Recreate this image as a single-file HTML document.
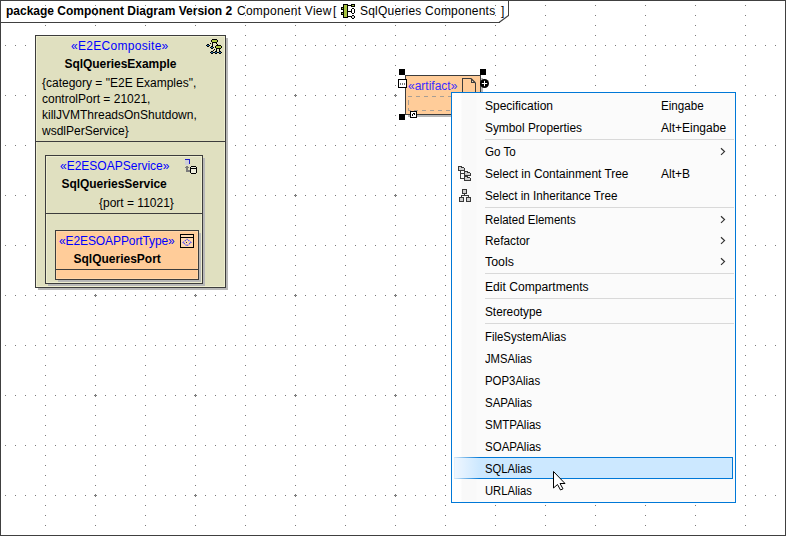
<!DOCTYPE html>
<html><head><meta charset="utf-8">
<style>
html,body{margin:0;padding:0;}
body{width:786px;height:536px;overflow:hidden;position:relative;background:#fff;font-family:"Liberation Sans",sans-serif;}
.a{position:absolute;}
.t{position:absolute;white-space:pre;font-size:12px;line-height:16px;color:#000;}
.bx{position:absolute;box-sizing:border-box;border:1px solid #3c3c3c;}
.sh{position:absolute;background:#b8b8b8;}
.st{color:#0000ff;}
.m{position:absolute;white-space:pre;font-size:12px;line-height:16px;color:#000;left:485px;transform-origin:0 0;}
.sep{position:absolute;left:485px;width:249px;height:1px;background:#d9d9d9;}
</style></head>
<body>
<!-- frame + header tab -->
<svg class="a" style="left:0;top:0" width="786" height="536" shape-rendering="crispEdges">
  <rect x="0.5" y="0.5" width="785" height="535" fill="none" stroke="#404040" stroke-width="1"/>
  <path d="M0 22.5H499.5" stroke="#404040" fill="none"/>
  <path d="M508.5 0V15.5" stroke="#404040" fill="none"/>
</svg>
<svg class="a" style="left:0;top:0" width="786" height="536">
  <path d="M499 22.5L508.5 15.5" stroke="#404040" stroke-width="1.1" fill="none"/>
</svg>
<div class="t" style="left:6px;top:3px;font-weight:bold">package Component Diagram Version 2</div>
<div class="t" style="left:237px;top:3px;letter-spacing:0.25px">Component View</div>
<div class="t" style="left:333px;top:3px">[</div>
<div class="t" style="left:360px;top:3px;letter-spacing:0.22px">SqlQueries Components</div>
<div class="t" style="left:501px;top:3px">]</div>

<!-- grid -->
<svg class="a" style="left:0;top:0" width="786" height="536" shape-rendering="crispEdges">
  <defs>
    <pattern id="ph" x="0" y="0" width="10" height="50" patternUnits="userSpaceOnUse"><rect x="5" y="45" width="1" height="1" fill="#7a7a7a"/></pattern>
    <pattern id="pv" x="0" y="0" width="50" height="10" patternUnits="userSpaceOnUse"><rect x="45" y="5" width="1" height="1" fill="#7a7a7a"/></pattern>
    <pattern id="pc" x="0" y="0" width="100" height="100" patternUnits="userSpaceOnUse"><rect x="94" y="95" width="3" height="1" fill="#7a7a7a"/><rect x="95" y="94" width="1" height="3" fill="#7a7a7a"/></pattern>
  </defs>
  <rect x="0" y="0" width="780" height="530" fill="url(#ph)"/>
  <rect x="0" y="0" width="780" height="530" fill="url(#pv)"/>
  <rect x="0" y="0" width="780" height="530" fill="url(#pc)"/>
</svg>

<!-- composite box -->
<div class="sh" style="left:38px;top:38px;width:190px;height:252px"></div>
<div class="bx" style="left:35px;top:35px;width:191px;height:253px;background:#e0e0c0;box-shadow:inset 0 0 0 1px #eeeed0"></div>
<div class="a" style="left:36px;top:141px;width:189px;height:1px;background:#3c3c3c"></div>
<div class="t st" style="left:71px;top:38px;letter-spacing:0.3px">«E2EComposite»</div>
<div class="t" style="left:64.5px;top:56px;font-weight:bold;letter-spacing:-0.05px">SqlQueriesExample</div>
<div class="t" style="left:42px;top:75px">{category = "E2E Examples",</div>
<div class="t" style="left:42px;top:91px">controlPort = 21021,</div>
<div class="t" style="left:42px;top:107px">killJVMThreadsOnShutdown,</div>
<div class="t" style="left:42px;top:123px">wsdlPerService}</div>

<!-- soap service box -->
<div class="sh" style="left:48px;top:158px;width:157px;height:128px"></div>
<div class="bx" style="left:45px;top:155px;width:158px;height:129px;background:#e0e0c0;box-shadow:inset 0 0 0 1px #eeeed0"></div>
<div class="a" style="left:46px;top:213px;width:156px;height:1px;background:#3c3c3c"></div>
<div class="t st" style="left:60px;top:158px">«E2ESOAPService»</div>
<div class="t" style="left:61.5px;top:176px;font-weight:bold;letter-spacing:-0.05px">SqlQueriesService</div>
<div class="t" style="left:99px;top:195px">{port = 11021}</div>

<!-- port box -->
<div class="sh" style="left:58px;top:233px;width:143px;height:49px"></div>
<div class="bx" style="left:55px;top:230px;width:144px;height:50px;background:#ffcc99;box-shadow:inset 0 0 0 1px #ffd6a8"></div>
<div class="a" style="left:56px;top:269px;width:142px;height:1px;background:#3c3c3c"></div>
<div class="t st" style="left:59px;top:233px;letter-spacing:-0.1px">«E2ESOAPPortType»</div>
<div class="t" style="left:73.5px;top:251px;font-weight:bold">SqlQueriesPort</div>


<svg class="a" style="left:0;top:0" width="786" height="536" shape-rendering="crispEdges">
  <!-- port type icon -->
  <rect x="180.5" y="234.5" width="13" height="13" fill="#ffd8b0" stroke="#000"/>
  <path d="M181 237.5H193" stroke="#000"/>
  <!-- soap service icon -->
<rect x="185" y="159" width="5" height="1" fill="#1c1cc8"/><rect x="185" y="160" width="4" height="1" fill="#cfcfd8"/><rect x="189" y="160" width="1" height="1" fill="#1c1cc8"/><rect x="185" y="161" width="4" height="1" fill="#cfcfd8"/><rect x="189" y="161" width="1" height="1" fill="#1c1cc8"/><rect x="185" y="162" width="4" height="1" fill="#cfcfd8"/><rect x="189" y="162" width="1" height="1" fill="#1c1cc8"/><rect x="185" y="163" width="4" height="1" fill="#cfcfd8"/><rect x="189" y="163" width="1" height="1" fill="#1c1cc8"/><rect x="185" y="164" width="4" height="1" fill="#cfcfd8"/><rect x="186" y="166" width="2" height="1" fill="#7c7c7c"/><rect x="191" y="166" width="5" height="1" fill="#000"/><rect x="185" y="167" width="4" height="1" fill="#7c7c7c"/><rect x="190" y="167" width="1" height="1" fill="#000"/><rect x="191" y="167" width="5" height="1" fill="#eeeedd"/><rect x="196" y="167" width="1" height="1" fill="#000"/><rect x="186" y="168" width="2" height="1" fill="#7c7c7c"/><rect x="190" y="168" width="7" height="1" fill="#000"/><rect x="186" y="169" width="2" height="1" fill="#7c7c7c"/><rect x="190" y="169" width="1" height="1" fill="#000"/><rect x="191" y="169" width="5" height="1" fill="#eeeedd"/><rect x="196" y="169" width="1" height="1" fill="#000"/><rect x="186" y="170" width="4" height="1" fill="#7c7c7c"/><rect x="190" y="170" width="1" height="1" fill="#000"/><rect x="191" y="170" width="5" height="1" fill="#eeeedd"/><rect x="196" y="170" width="1" height="1" fill="#000"/><rect x="186" y="171" width="4" height="1" fill="#7c7c7c"/><rect x="190" y="171" width="1" height="1" fill="#000"/><rect x="191" y="171" width="5" height="1" fill="#eeeedd"/><rect x="196" y="171" width="1" height="1" fill="#000"/><rect x="190" y="172" width="1" height="1" fill="#000"/><rect x="191" y="172" width="5" height="1" fill="#eeeedd"/><rect x="196" y="172" width="1" height="1" fill="#000"/><rect x="191" y="173" width="5" height="1" fill="#000"/>
</svg>
<svg class="a" style="left:0;top:0" width="786" height="536">
  <path d="M183 242.5L187 239.2L191 242.5L187 245.8Z" fill="none" stroke="#4646ff" stroke-width="1.1" stroke-dasharray="1.4 0.9"/>
  <rect x="186" y="242" width="1" height="1" fill="#333"/>
</svg>

<!-- artifact -->
<div class="sh" style="left:408px;top:78px;width:75px;height:39px"></div>
<div class="bx" style="left:405px;top:75px;width:76px;height:40px;background:#ffcc99"></div>
<div class="t" style="left:408px;top:78px;color:#3a2cff">«artifact»</div>
<svg class="a" style="left:0;top:0" width="786" height="536" shape-rendering="crispEdges">
  <!-- dashed inner rect -->
  <path d="M408 96.5H452" stroke="#a89e94" stroke-dasharray="4 4" fill="none"/><path d="M408.5 100V105M408.5 108V110.5H411" stroke="#a89e94" fill="none"/>
  <path d="M414 110.5H452" stroke="#a89e94" stroke-dasharray="4 4" fill="none"/>
  <!-- doc icon -->
  <path d="M471.5 79V82.5H475" stroke="#3c3c3c" fill="#ffe8d0"/>
  <path d="M462.5 92V78.5H471" stroke="#3c3c3c" fill="none"/>
  <path d="M475.5 83V92" stroke="#3c3c3c" fill="none"/>
  <!-- handles -->
  <rect x="399" y="69" width="6" height="6" fill="#000"/>
  <rect x="480" y="69" width="6" height="6" fill="#000"/>
  <rect x="399" y="114" width="6" height="6" fill="#000"/>
  <!-- ... button -->
  <rect x="398.5" y="79.5" width="8" height="8" fill="#fff" stroke="#000"/>
  <rect x="400" y="83" width="1" height="2" fill="#777"/>
  <rect x="402" y="83" width="1" height="2" fill="#777"/>
  <rect x="404" y="83" width="1" height="2" fill="#777"/>
  <!-- small button -->
  <rect x="410.5" y="111.5" width="6" height="6" fill="#fff" stroke="#000"/>
  <rect x="412" y="114" width="1" height="2" fill="#000"/>
  <rect x="413" y="113" width="1" height="1" fill="#000"/>
  <rect x="414" y="113" width="1" height="2" fill="#000"/>
</svg>
<svg class="a" style="left:0;top:0" width="786" height="536">
  <path d="M471 78.5L475.5 83" stroke="#3c3c3c" stroke-width="1.2" fill="none"/>
  <circle cx="484.5" cy="83.5" r="4.5" fill="#000"/>
  <path d="M484.5 80.8V86.2M481.8 83.5H487.2" stroke="#fff" stroke-width="1"/>
</svg>


<!-- icons (pixel art) -->
<svg class="a" style="left:0;top:0" width="786" height="536" shape-rendering="crispEdges">
<rect x="343" y="4" width="5" height="1" fill="#000"/><rect x="351" y="4" width="4" height="1" fill="#000"/><rect x="343" y="5" width="1" height="1" fill="#000"/><rect x="344" y="5" width="3" height="1" fill="#a9c642"/><rect x="347" y="5" width="5" height="1" fill="#000"/><rect x="352" y="5" width="2" height="1" fill="#a9c642"/><rect x="354" y="5" width="1" height="1" fill="#000"/><rect x="343" y="6" width="1" height="1" fill="#000"/><rect x="344" y="6" width="3" height="1" fill="#a9c642"/><rect x="347" y="6" width="1" height="1" fill="#000"/><rect x="351" y="6" width="4" height="1" fill="#000"/><rect x="341" y="7" width="3" height="1" fill="#000"/><rect x="344" y="7" width="3" height="1" fill="#a9c642"/><rect x="347" y="7" width="1" height="1" fill="#000"/><rect x="341" y="8" width="1" height="1" fill="#000"/><rect x="342" y="8" width="1" height="1" fill="#a9c642"/><rect x="343" y="8" width="1" height="1" fill="#000"/><rect x="344" y="8" width="3" height="1" fill="#a9c642"/><rect x="347" y="8" width="1" height="1" fill="#000"/><rect x="352" y="8" width="2" height="1" fill="#000"/><rect x="341" y="9" width="3" height="1" fill="#000"/><rect x="344" y="9" width="3" height="1" fill="#a9c642"/><rect x="347" y="9" width="1" height="1" fill="#000"/><rect x="351" y="9" width="1" height="1" fill="#000"/><rect x="352" y="9" width="2" height="1" fill="#fff"/><rect x="354" y="9" width="1" height="1" fill="#000"/><rect x="343" y="10" width="1" height="1" fill="#000"/><rect x="344" y="10" width="3" height="1" fill="#a9c642"/><rect x="347" y="10" width="1" height="1" fill="#000"/><rect x="351" y="10" width="1" height="1" fill="#000"/><rect x="352" y="10" width="2" height="1" fill="#fff"/><rect x="354" y="10" width="1" height="1" fill="#000"/><rect x="343" y="11" width="1" height="1" fill="#000"/><rect x="344" y="11" width="3" height="1" fill="#a9c642"/><rect x="347" y="11" width="5" height="1" fill="#000"/><rect x="352" y="11" width="2" height="1" fill="#fff"/><rect x="354" y="11" width="1" height="1" fill="#000"/><rect x="341" y="12" width="3" height="1" fill="#000"/><rect x="344" y="12" width="3" height="1" fill="#a9c642"/><rect x="347" y="12" width="1" height="1" fill="#000"/><rect x="351" y="12" width="1" height="1" fill="#000"/><rect x="352" y="12" width="2" height="1" fill="#fff"/><rect x="354" y="12" width="1" height="1" fill="#000"/><rect x="341" y="13" width="1" height="1" fill="#000"/><rect x="342" y="13" width="1" height="1" fill="#a9c642"/><rect x="343" y="13" width="1" height="1" fill="#000"/><rect x="344" y="13" width="3" height="1" fill="#a9c642"/><rect x="347" y="13" width="1" height="1" fill="#000"/><rect x="352" y="13" width="2" height="1" fill="#000"/><rect x="341" y="14" width="3" height="1" fill="#000"/><rect x="344" y="14" width="3" height="1" fill="#a9c642"/><rect x="347" y="14" width="1" height="1" fill="#000"/><rect x="343" y="15" width="1" height="1" fill="#000"/><rect x="344" y="15" width="3" height="1" fill="#a9c642"/><rect x="347" y="15" width="1" height="1" fill="#000"/><rect x="352" y="15" width="2" height="1" fill="#000"/><rect x="343" y="16" width="1" height="1" fill="#000"/><rect x="344" y="16" width="3" height="1" fill="#a9c642"/><rect x="347" y="16" width="5" height="1" fill="#000"/><rect x="352" y="16" width="2" height="1" fill="#d8d8d8"/><rect x="354" y="16" width="1" height="1" fill="#000"/><rect x="343" y="17" width="5" height="1" fill="#000"/><rect x="351" y="17" width="1" height="1" fill="#000"/><rect x="352" y="17" width="2" height="1" fill="#d8d8d8"/><rect x="354" y="17" width="1" height="1" fill="#000"/><rect x="352" y="18" width="2" height="1" fill="#000"/>
<rect x="212" y="39" width="5" height="1" fill="#000"/><rect x="211" y="40" width="1" height="1" fill="#000"/><rect x="212" y="40" width="5" height="1" fill="#a9c642"/><rect x="217" y="40" width="1" height="1" fill="#000"/><rect x="211" y="41" width="1" height="1" fill="#000"/><rect x="212" y="41" width="5" height="1" fill="#a9c642"/><rect x="217" y="41" width="1" height="1" fill="#000"/><rect x="212" y="42" width="5" height="1" fill="#000"/><rect x="210" y="43" width="1" height="1" fill="#000"/><rect x="212" y="43" width="1" height="1" fill="#000"/><rect x="216" y="43" width="1" height="1" fill="#000"/><rect x="207" y="44" width="2" height="1" fill="#000"/><rect x="212" y="44" width="1" height="1" fill="#000"/><rect x="217" y="44" width="1" height="1" fill="#000"/><rect x="206" y="45" width="1" height="1" fill="#000"/><rect x="207" y="45" width="2" height="1" fill="#2f6da3"/><rect x="209" y="45" width="1" height="1" fill="#000"/><rect x="212" y="45" width="1" height="1" fill="#000"/><rect x="216" y="45" width="5" height="1" fill="#000"/><rect x="207" y="46" width="2" height="1" fill="#000"/><rect x="211" y="46" width="2" height="1" fill="#000"/><rect x="215" y="46" width="1" height="1" fill="#000"/><rect x="216" y="46" width="5" height="1" fill="#a9c642"/><rect x="221" y="46" width="1" height="1" fill="#000"/><rect x="210" y="47" width="1" height="1" fill="#000"/><rect x="211" y="47" width="2" height="1" fill="#2f6da3"/><rect x="213" y="47" width="1" height="1" fill="#000"/><rect x="215" y="47" width="1" height="1" fill="#000"/><rect x="216" y="47" width="5" height="1" fill="#a9c642"/><rect x="221" y="47" width="1" height="1" fill="#000"/><rect x="211" y="48" width="2" height="1" fill="#000"/><rect x="216" y="48" width="5" height="1" fill="#000"/><rect x="214" y="49" width="1" height="1" fill="#000"/><rect x="216" y="49" width="1" height="1" fill="#000"/><rect x="219" y="49" width="1" height="1" fill="#000"/><rect x="213" y="50" width="1" height="1" fill="#000"/><rect x="216" y="50" width="1" height="1" fill="#000"/><rect x="219" y="50" width="1" height="1" fill="#000"/><rect x="211" y="51" width="2" height="1" fill="#000"/><rect x="215" y="51" width="2" height="1" fill="#000"/><rect x="219" y="51" width="2" height="1" fill="#000"/><rect x="210" y="52" width="1" height="1" fill="#000"/><rect x="211" y="52" width="2" height="1" fill="#2f6da3"/><rect x="213" y="52" width="2" height="1" fill="#000"/><rect x="215" y="52" width="2" height="1" fill="#2f6da3"/><rect x="217" y="52" width="2" height="1" fill="#000"/><rect x="219" y="52" width="2" height="1" fill="#2f6da3"/><rect x="221" y="52" width="1" height="1" fill="#000"/><rect x="211" y="53" width="2" height="1" fill="#000"/><rect x="215" y="53" width="2" height="1" fill="#000"/><rect x="219" y="53" width="2" height="1" fill="#000"/>
</svg>

<!-- context menu -->
<div class="bx" style="left:451px;top:92px;width:285px;height:411px;background:linear-gradient(to right,#fefefe 0px,#fefefe 9px,#f9f9f9 10px,#f9f9f9 24px,#fbfbfb 25px);border-color:#0078d7"></div>
<div class="a" style="left:454px;top:457px;width:279px;height:22px;background:linear-gradient(to right,#f0f7ff 0px,#cce8ff 26px)"></div>
<div class="a" style="left:454px;top:457px;width:279px;height:1px;background:linear-gradient(to right,#d4e8f8 0px,#0078d7 26px)"></div>
<div class="a" style="left:454px;top:478px;width:279px;height:1px;background:linear-gradient(to right,#d4e8f8 0px,#0078d7 26px)"></div>
<div class="a" style="left:732px;top:457px;width:1px;height:22px;background:#0078d7"></div>
<div class="a" style="left:454px;top:458px;width:1px;height:20px;background:#e4f0fb"></div>
<div class="sep" style="top:139px"></div>
<div class="sep" style="top:207px"></div>
<div class="sep" style="top:273px"></div>
<div class="sep" style="top:298px"></div>
<div class="sep" style="top:323px"></div>
<div class="m" style="top:98px">Specification</div>
<div class="m" style="top:120px;transform:scaleX(0.99)">Symbol Properties</div>
<div class="m" style="top:144px;transform:scaleX(0.97)">Go To</div>
<div class="m" style="top:166px;transform:scaleX(0.991)">Select in Containment Tree</div>
<div class="m" style="top:188px;transform:scaleX(0.973)">Select in Inheritance Tree</div>
<div class="m" style="top:212px;transform:scaleX(0.957)">Related Elements</div>
<div class="m" style="top:233px;transform:scaleX(0.988)">Refactor</div>
<div class="m" style="top:254px;transform:scaleX(1.03)">Tools</div>
<div class="m" style="top:279px;transform:scaleX(1.009)">Edit Compartments</div>
<div class="m" style="top:304px;transform:scaleX(0.982)">Stereotype</div>
<div class="m" style="top:329px;transform:scaleX(0.95)">FileSystemAlias</div>
<div class="m" style="top:351px;transform:scaleX(0.937)">JMSAlias</div>
<div class="m" style="top:373px;transform:scaleX(0.95)">POP3Alias</div>
<div class="m" style="top:395px;transform:scaleX(0.958)">SAPAlias</div>
<div class="m" style="top:417px;transform:scaleX(0.96)">SMTPAlias</div>
<div class="m" style="top:439px;transform:scaleX(0.96)">SOAPAlias</div>
<div class="m" style="top:461px;transform:scaleX(0.937)">SQLAlias</div>
<div class="m" style="top:483px;transform:scaleX(0.937)">URLAlias</div>
<div class="m" style="top:98px;left:661px;transform:scaleX(0.97)">Eingabe</div>
<div class="m" style="top:120px;left:661px">Alt+Eingabe</div>
<div class="m" style="top:166px;left:661px">Alt+B</div>

<svg class="a" style="left:0;top:0" width="786" height="536" shape-rendering="crispEdges">
<rect x="458" y="166" width="4" height="1" fill="#383838"/><rect x="458" y="167" width="1" height="1" fill="#383838"/><rect x="459" y="167" width="2" height="1" fill="#d0d0d0"/><rect x="461" y="167" width="3" height="1" fill="#383838"/><rect x="458" y="168" width="1" height="1" fill="#383838"/><rect x="459" y="168" width="5" height="1" fill="#d0d0d0"/><rect x="464" y="168" width="1" height="1" fill="#383838"/><rect x="458" y="169" width="1" height="1" fill="#383838"/><rect x="459" y="169" width="5" height="1" fill="#d0d0d0"/><rect x="464" y="169" width="1" height="1" fill="#383838"/><rect x="458" y="170" width="7" height="1" fill="#383838"/><rect x="460" y="171" width="1" height="1" fill="#383838"/><rect x="461" y="171" width="3" height="1" fill="#f9f9f9"/><rect x="464" y="171" width="4" height="1" fill="#383838"/><rect x="460" y="172" width="1" height="1" fill="#383838"/><rect x="461" y="172" width="3" height="1" fill="#f9f9f9"/><rect x="464" y="172" width="1" height="1" fill="#383838"/><rect x="465" y="172" width="2" height="1" fill="#d0d0d0"/><rect x="467" y="172" width="3" height="1" fill="#383838"/><rect x="460" y="173" width="5" height="1" fill="#383838"/><rect x="465" y="173" width="5" height="1" fill="#d0d0d0"/><rect x="470" y="173" width="1" height="1" fill="#383838"/><rect x="460" y="174" width="1" height="1" fill="#383838"/><rect x="461" y="174" width="3" height="1" fill="#f9f9f9"/><rect x="464" y="174" width="1" height="1" fill="#383838"/><rect x="465" y="174" width="5" height="1" fill="#d0d0d0"/><rect x="470" y="174" width="1" height="1" fill="#383838"/><rect x="460" y="175" width="1" height="1" fill="#383838"/><rect x="461" y="175" width="3" height="1" fill="#f9f9f9"/><rect x="464" y="175" width="7" height="1" fill="#383838"/><rect x="460" y="176" width="1" height="1" fill="#383838"/><rect x="461" y="176" width="3" height="1" fill="#f9f9f9"/><rect x="464" y="176" width="4" height="1" fill="#383838"/><rect x="460" y="177" width="1" height="1" fill="#383838"/><rect x="461" y="177" width="3" height="1" fill="#f9f9f9"/><rect x="464" y="177" width="1" height="1" fill="#383838"/><rect x="465" y="177" width="2" height="1" fill="#d0d0d0"/><rect x="467" y="177" width="3" height="1" fill="#383838"/><rect x="460" y="178" width="5" height="1" fill="#383838"/><rect x="465" y="178" width="5" height="1" fill="#d0d0d0"/><rect x="470" y="178" width="1" height="1" fill="#383838"/><rect x="464" y="179" width="1" height="1" fill="#383838"/><rect x="465" y="179" width="5" height="1" fill="#d0d0d0"/><rect x="470" y="179" width="1" height="1" fill="#383838"/><rect x="464" y="180" width="7" height="1" fill="#383838"/>
<rect x="462" y="189" width="5" height="1" fill="#383838"/><rect x="462" y="190" width="1" height="1" fill="#383838"/><rect x="463" y="190" width="3" height="1" fill="#d0d0d0"/><rect x="466" y="190" width="1" height="1" fill="#383838"/><rect x="462" y="191" width="1" height="1" fill="#383838"/><rect x="463" y="191" width="3" height="1" fill="#d0d0d0"/><rect x="466" y="191" width="1" height="1" fill="#383838"/><rect x="462" y="192" width="1" height="1" fill="#383838"/><rect x="463" y="192" width="3" height="1" fill="#d0d0d0"/><rect x="466" y="192" width="1" height="1" fill="#383838"/><rect x="462" y="193" width="5" height="1" fill="#383838"/><rect x="464" y="194" width="1" height="1" fill="#383838"/><rect x="461" y="195" width="8" height="1" fill="#383838"/><rect x="461" y="196" width="1" height="1" fill="#383838"/><rect x="468" y="196" width="1" height="1" fill="#383838"/><rect x="459" y="197" width="5" height="1" fill="#383838"/><rect x="466" y="197" width="5" height="1" fill="#383838"/><rect x="459" y="198" width="1" height="1" fill="#383838"/><rect x="460" y="198" width="3" height="1" fill="#d0d0d0"/><rect x="463" y="198" width="1" height="1" fill="#383838"/><rect x="466" y="198" width="1" height="1" fill="#383838"/><rect x="467" y="198" width="3" height="1" fill="#d0d0d0"/><rect x="470" y="198" width="1" height="1" fill="#383838"/><rect x="459" y="199" width="1" height="1" fill="#383838"/><rect x="460" y="199" width="3" height="1" fill="#d0d0d0"/><rect x="463" y="199" width="1" height="1" fill="#383838"/><rect x="466" y="199" width="1" height="1" fill="#383838"/><rect x="467" y="199" width="3" height="1" fill="#d0d0d0"/><rect x="470" y="199" width="1" height="1" fill="#383838"/><rect x="459" y="200" width="1" height="1" fill="#383838"/><rect x="460" y="200" width="3" height="1" fill="#d0d0d0"/><rect x="463" y="200" width="1" height="1" fill="#383838"/><rect x="466" y="200" width="1" height="1" fill="#383838"/><rect x="467" y="200" width="3" height="1" fill="#d0d0d0"/><rect x="470" y="200" width="1" height="1" fill="#383838"/><rect x="459" y="201" width="5" height="1" fill="#383838"/><rect x="466" y="201" width="5" height="1" fill="#383838"/>
</svg>

<svg class="a" style="left:0;top:0" width="786" height="536">
  <path d="M721 148.3L724.5 151.6L721 154.9" fill="none" stroke="#333" stroke-width="1.2"/>
  <path d="M721 216.3L724.5 219.6L721 222.9" fill="none" stroke="#333" stroke-width="1.2"/>
  <path d="M721 237.3L724.5 240.6L721 243.9" fill="none" stroke="#333" stroke-width="1.2"/>
  <path d="M721 258.3L724.5 261.6L721 264.9" fill="none" stroke="#333" stroke-width="1.2"/>
  <path d="M553.5 471.5V488L557.5 484.5L560.5 490L563 488.8L560 483.5H565Z" fill="#fff" stroke="#000" stroke-width="1" stroke-linejoin="round"/>
</svg>
</body></html>
